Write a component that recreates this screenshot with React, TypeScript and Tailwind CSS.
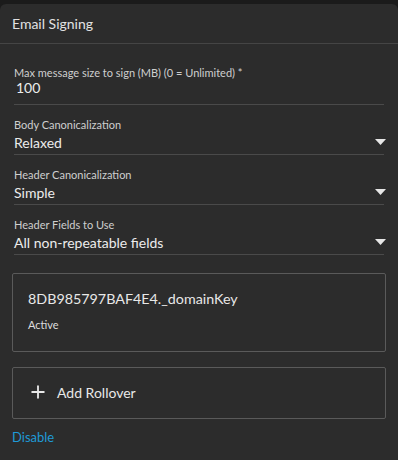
import { Plus } from 'lucide-react';

const selects = [
  { label: 'Body Canonicalization', value: 'Relaxed' },
  { label: 'Header Canonicalization', value: 'Simple' },
  { label: 'Header Fields to Use', value: 'All non-repeatable fields' },
];

function Caret() {
  return (
    <svg width="11" height="6" viewBox="0 0 11 6" className="shrink-0">
      <path d="M0 0 H11 L5.5 6 Z" fill="#e6e6e6" />
    </svg>
  );
}

export default function App() {
  return (
    <div
      className="w-[398px] h-[460px] overflow-hidden bg-[#1b1b1b] pt-1"
      style={{ fontFamily: 'Lato, "Noto Sans", sans-serif' }}
    >
      <div className="h-full rounded-t-md bg-[#2c2c2c]">
        {/* header */}
        <div className="h-10 px-3 flex items-center border-b border-[#454545]">
          <h1 className="text-[14px] text-[#e2e2e2]">Email Signing</h1>
        </div>

        <div className="px-3">
          {/* text input */}
          <div className="mx-[2px] pt-[21px] pb-[8px] border-b border-[#4a4a4a]">
            <div className="text-[11px] leading-[15px] text-[#cfcfcf]">
              Max message size to sign (MB) (0 = Unlimited) *
            </div>
            <div className="pl-[2px] text-[14px] leading-4 text-[#ececec]">100</div>
          </div>

          {/* selects */}
          {selects.map((s) => (
            <div key={s.label} className="mx-[2px] pt-3 pb-[2px] border-b border-[#4a4a4a]">
              <div className="text-[11px] leading-[15px] text-[#cfcfcf]">{s.label}</div>
              <div className="flex items-center justify-between h-5">
                <span className="text-[14px] text-[#ececec]">{s.value}</span>
                <span className="-mr-[2px]">
                  <Caret />
                </span>
              </div>
            </div>
          ))}

          {/* key card */}
          <div className="mt-[18px] h-[79px] rounded-[2px] border border-[#5a5a5a] px-[15px] pt-[15px]">
            <div className="text-[14.3px] leading-5 text-[#e8e8e8]">8DB985797BAF4E4._domainKey</div>
            <div className="mt-2 text-[11px] leading-[15px] text-[#dcdcdc]">Active</div>
          </div>

          {/* add rollover */}
          <button className="mt-[15px] w-full h-[52px] rounded-[2px] border border-[#5a5a5a] flex items-center gap-[9px] pl-[15px] pb-[2px] text-[14px] text-[#e8e8e8]">
            <Plus className="h-5 w-5" strokeWidth={2.2} color="#e8e8e8" />
            Add Rollover
          </button>

          <button className="mt-[10px] block text-[13px] leading-4 text-[#1f9ad6]">Disable</button>
        </div>
      </div>
    </div>
  );
}
